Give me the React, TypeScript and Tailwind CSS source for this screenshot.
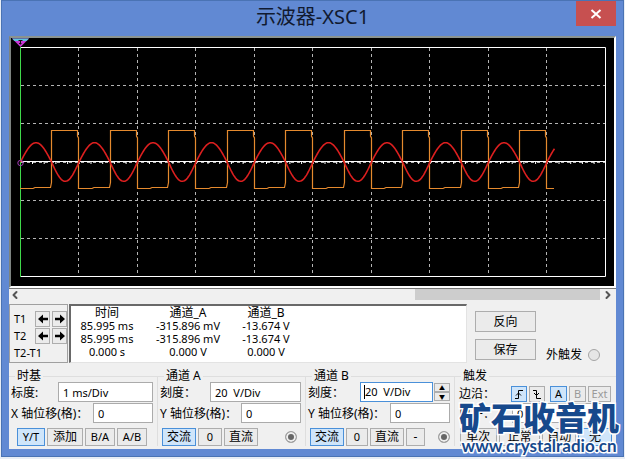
import { ComponentProps, ReactNode } from "react"
import clsx from "clsx"
import { ChevronLeft, ChevronRight } from "lucide-react"

const LEFT = 20
const PERIOD = 58.5
const RISE = 31
const END = 554

const columns = [78, 137, 195, 254, 312, 371, 429, 488, 546]
const rows = [85, 123, 200, 238]

function sinePath() {
  const points: string[] = []
  for (let x = LEFT; x <= END; x++) {
    const t = (x - LEFT) % PERIOD
    const phase =
      t < RISE
        ? (t / RISE) * Math.PI
        : Math.PI + ((t - RISE) / (PERIOD - RISE)) * Math.PI
    points.push(`${x + 0.5},${(162 - 19.3 * Math.sin(phase)).toFixed(1)}`)
  }
  return "M" + points.join("L")
}

function squarePath() {
  let d = `M${LEFT} 188.5`
  for (let i = 0; i < 9; i++) {
    const x = LEFT + Math.round(i * PERIOD)
    d += `H${x + 13}l2 -1H${x + 30.5}l1 -5V130.5H${x + 57.5}V136l1 2V188.5`
  }
  return d + `H${END}`
}

function Scope() {
  return (
    <div className="border-2 border-t-[#8a9390] border-r-white border-b-white border-l-[#7d8480] bg-black">
      <svg viewBox="11 38 603 248" className="block h-auto w-full" fill="none">
        <g stroke="#b4b4b4" strokeDasharray="3 3">
          {columns.map((x) => (
            <path key={x} d={`M${x + 0.5} 48V276`} />
          ))}
          {rows.map((y) => (
            <path key={y} d={`M21 ${y + 0.5}H605`} />
          ))}
          <path d="M21 162.5H605" />
        </g>
        <path d="M21 47.5H605.5V276.5H20" stroke="#fff" />
        <path d="M21 161.5H605" stroke="#fff" />
        <path
          d="M32 163H605"
          stroke="#fff"
          strokeWidth="2"
          strokeDasharray="1 10.7"
        />
        <path d="M20.5 47V277" stroke="#3fd84a" />
        <path d={squarePath()} stroke="#e58a2e" strokeWidth="1.2" />
        <path d={sinePath()} stroke="#dc1f1f" strokeWidth="1.6" />
        <circle cx="20.5" cy="163" r="2.7" stroke="#a03ab4" />
        <path d="M12 38.5H29L20.5 47Z" fill="#c936d8" />
        <path d="M12 38.5H29L26.5 41H14.5Z" fill="#5cc4e0" />
        <path d="M18.5 40.5H22.5M20.5 40.5V44.5M19 43.5H21.5" stroke="#111" />
      </svg>
    </div>
  )
}

type ButtonProps = ComponentProps<"button"> & { active?: boolean }

function Button({ active, className, ...props }: ButtonProps) {
  return (
    <button
      type="button"
      className={clsx(
        "flex items-center justify-center border whitespace-nowrap",
        active
          ? "border-[#4a90d9] bg-[#cfe5fa]"
          : "border-[#adadad] bg-[#ebebeb]",
        className
      )}
      {...props}
    />
  )
}

function Group({ title, children }: { title: string; children: ReactNode }) {
  return (
    <fieldset className="min-w-0 border-t border-r border-[#dedede] pr-1 pl-0.5 last:border-r-0">
      <legend className="ml-1 px-0.5 leading-3">{title}</legend>
      <div className="flex flex-col gap-px">{children}</div>
    </fieldset>
  )
}

type FieldProps = {
  id: string
  label: string
  value: string
  width: string
}

function Field({ id, label, value, width }: FieldProps) {
  return (
    <div className="flex h-5 items-center justify-between">
      <label htmlFor={id} className="pt-0.5 whitespace-nowrap">
        {label}
      </label>
      <input
        id={id}
        defaultValue={value}
        className={clsx(
          "h-5 border border-[#ababab] bg-white px-1 text-[11px]",
          width
        )}
      />
    </div>
  )
}

function Radio({ label, checked }: { label: string; checked?: boolean }) {
  return (
    <input
      type="radio"
      aria-label={label}
      defaultChecked={checked}
      className="size-3 appearance-none rounded-full border border-[#a5a5a5] bg-[#e6e6e6] checked:bg-[#666] checked:inset-ring-2 checked:inset-ring-[#eee]"
    />
  )
}

function Cursors() {
  return (
    <div className="flex w-[59px] flex-col justify-between border border-[#a0a0a0] pt-1.5 pb-px pl-1">
      {["T1", "T2"].map((name) => (
        <div key={name} className="flex h-4 items-center gap-0.5">
          <span className="w-[19px]">{name}</span>
          <Button className="h-4 w-[15px]" aria-label={`${name} left`}>
            <svg viewBox="0 0 10 10" className="size-2.5">
              <path d="M0 5L5 0.5V3.7H10V6.3H5V9.5Z" />
            </svg>
          </Button>
          <Button className="h-4 w-[15px]" aria-label={`${name} right`}>
            <svg viewBox="0 0 10 10" className="size-2.5">
              <path d="M10 5L5 0.5V3.7H0V6.3H5V9.5Z" />
            </svg>
          </Button>
        </div>
      ))}
      <span className="leading-4">T2-T1</span>
    </div>
  )
}

const readings = [
  ["85.995 ms", "-315.896 mV", "-13.674 V"],
  ["85.995 ms", "-315.896 mV", "-13.674 V"],
  ["0.000 s", "0.000 V", "0.000 V"],
]

function Readings() {
  return (
    <div className="flex-1 border border-t-2 border-l-2 border-t-[#696969] border-r-[#e3e3e3] border-b-[#e3e3e3] border-l-[#696969] bg-white">
      <table className="text-center leading-[13px]">
        <thead>
          <tr className="text-xs leading-[13px]">
            <th className="w-[72px] p-0 font-normal">时间</th>
            <th className="w-[90px] p-0 font-normal">通道_A</th>
            <th className="w-[66px] p-0 font-normal">通道_B</th>
          </tr>
        </thead>
        <tbody>
          {readings.map((row, i) => (
            <tr key={i}>
              {row.map((cell, j) => (
                <td key={j} className="p-0">
                  {cell}
                </td>
              ))}
            </tr>
          ))}
        </tbody>
      </table>
    </div>
  )
}

function Watermark() {
  return (
    <div className="pointer-events-none absolute right-1 bottom-0 flex flex-col items-center whitespace-nowrap text-[#17498c] [-webkit-text-stroke:3px_white] [paint-order:stroke_fill]">
      <span className="text-[32px] leading-9 font-black">矿石收音机</span>
      <span className="font-[Lato] text-[17px] leading-5 font-bold">
        www.crystalradio.cn
      </span>
    </div>
  )
}

function App() {
  return (
    <div className="bg-[#e8edf5] px-px pb-0.5 font-['Noto_Sans','Noto_Sans_CJK_SC',sans-serif] text-[11px] text-black">
      <main className="relative border border-[#4a73b4] bg-[#6189d3] px-[7px] pb-[7px]">
        <header className="grid h-[35px] grid-cols-[40px_1fr_40px] items-start">
          <h1 className="col-start-2 text-center text-xl leading-8 text-[#111a30]">
            示波器-XSC1
          </h1>
          <button
            type="button"
            aria-label="关闭"
            className="flex h-[25px] items-center justify-center bg-[#c75050]"
          >
            <svg viewBox="0 0 12 10" className="h-2.5 w-3">
              <path d="M1.5 1L10.5 9M10.5 1L1.5 9" stroke="#fff" strokeWidth="2" />
            </svg>
          </button>
        </header>

        <div className="bg-[#f0f0f0]">
          <Scope />
          <div className="flex h-4 items-start justify-between border-t border-[#777]">
            <button type="button" aria-label="向左滚动" className="w-4">
              <ChevronLeft size={12} strokeWidth={4} color="#555" />
            </button>
            <div className="ml-auto h-[11px] w-[185px] bg-[#cdcdcd]" />
            <button type="button" aria-label="向右滚动" className="w-4 pl-0.5">
              <ChevronRight size={12} strokeWidth={4} color="#555" />
            </button>
          </div>

          <section className="flex h-[59px]">
            <div className="flex flex-1 gap-px">
              <Cursors />
              <Readings />
            </div>
            <div className="flex w-[149px] pt-[7px] pl-2 text-xs">
              <div className="flex w-[61px] flex-col gap-[7px]">
                <Button className="h-[21px]">反向</Button>
                <Button className="h-[21px]">保存</Button>
              </div>
              <label className="flex h-4 items-center gap-1.5 self-end pl-2.5 leading-4 whitespace-nowrap">
                外触发
                <Radio label="外触发" />
              </label>
            </div>
          </section>

          <section className="grid grid-cols-[149fr_148fr_149fr_161fr] pt-[7px] pb-[3px] text-xs">
            <Group title="时基">
              <Field id="time" label="标度:" value="1 ms/Div" width="w-[95px]" />
              <Field id="time-x" label="X 轴位移(格)：" value="0" width="w-[60px]" />
              <div className="flex gap-0.5 pt-1 pl-1.5 text-[11px]">
                <Button active className="h-[18px] w-7">Y/T</Button>
                <Button className="h-[18px] w-9 text-xs">添加</Button>
                <Button className="h-[18px] w-[30px]">B/A</Button>
                <Button className="h-[18px] w-[30px]">A/B</Button>
              </div>
            </Group>

            <Group title="通道 A">
              <Field id="a-scale" label="刻度：" value="20  V/Div" width="w-[91px]" />
              <Field id="a-y" label="Y 轴位移(格)：" value="0" width="w-[60px]" />
              <div className="flex items-center gap-0.5 pt-1 pl-0.5">
                <Button active className="h-[18px] w-[34px]">交流</Button>
                <Button className="h-[18px] w-6 text-[11px]">0</Button>
                <Button className="h-[18px] w-[34px]">直流</Button>
                <span className="ml-auto flex pr-1">
                  <Radio label="通道 A" checked />
                </span>
              </div>
            </Group>

            <Group title="通道 B">
              <div className="flex h-5 items-center">
                <label htmlFor="b-scale" className="flex-1 pt-0.5">刻度：</label>
                <div className="flex h-5 w-[73px] items-center border border-[#4a90d9] bg-white pl-[3px] text-[11px]">
                  <span className="h-3.5 w-px bg-black" />
                  <input id="b-scale" defaultValue="20  V/Div" className="w-full min-w-0" />
                </div>
                <div className="ml-px flex w-4 flex-col">
                  <Button className="h-[9px] text-[6px]" aria-label="增加">▲</Button>
                  <Button className="h-[9px] text-[6px]" aria-label="减少">▼</Button>
                </div>
              </div>
              <Field id="b-y" label="Y 轴位移(格)：" value="0" width="w-[60px]" />
              <div className="flex items-center gap-0.5 pt-1 pl-0.5">
                <Button active className="h-[18px] w-[34px]">交流</Button>
                <Button className="h-[18px] w-[22px] text-[11px]">0</Button>
                <Button className="h-[18px] w-[34px]">直流</Button>
                <Button className="h-[18px] w-[19px]">-</Button>
                <span className="ml-auto flex">
                  <Radio label="通道 B" checked />
                </span>
              </div>
            </Group>

            <Group title="触发">
              <div className="flex h-5 items-end gap-0.5 pl-0.5 text-[11px]">
                <span className="w-[50px] text-xs">边沿：</span>
                <Button active className="h-4 w-4" aria-label="上升沿">
                  <svg viewBox="0 0 10 10" className="size-2.5" fill="none" stroke="#000">
                    <path d="M1 9.5H4.5V1.5H9M2 6.5L4.5 4L7 6.5" />
                  </svg>
                </Button>
                <Button className="h-4 w-4" aria-label="下降沿">
                  <svg viewBox="0 0 10 10" className="size-2.5" fill="none" stroke="#000">
                    <path d="M1 1.5H4.5V9.5H9M2 4L4.5 6.5L7 4" />
                  </svg>
                </Button>
                <Button active className="ml-[3px] h-4 w-[17px]">A</Button>
                <Button className="h-4 w-[17px] text-[#999]">B</Button>
                <Button className="h-4 w-[23px] text-[#999]">Ext</Button>
              </div>
              <div className="pl-0.5">
                <Field id="level" label="电平：" value="0" width="w-[100px]" />
              </div>
              <div className="grid grid-cols-[37fr_42fr_34fr_34fr] gap-0.5 pt-1 pl-[3px]">
                <Button className="h-[18px]">单次</Button>
                <Button className="h-[18px]">正常</Button>
                <Button className="h-[18px]">自动</Button>
                <Button active className="h-[18px]">无</Button>
              </div>
            </Group>
          </section>
        </div>
        <Watermark />
      </main>
    </div>
  )
}

export default App
